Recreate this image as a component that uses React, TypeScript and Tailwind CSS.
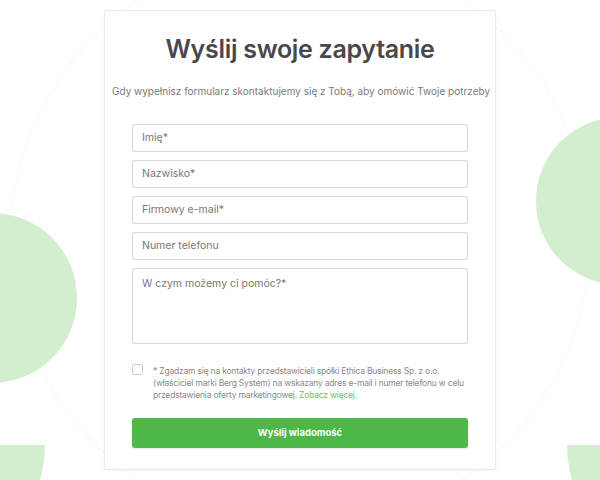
import React from 'react';

const fields = ['Imię*', 'Nazwisko*', 'Firmowy e-mail*', 'Numer telefonu'];

const App: React.FC = () => {
    return (
        <div className="relative w-[600px] h-[480px] overflow-hidden bg-white font-['Inter',sans-serif]">
            {/* background decoration */}
            <div className="absolute left-[10px] top-[-50px] w-[580px] h-[580px] rounded-full border border-dashed border-[#f3f3f3]"></div>
            <div className="absolute left-[-93px] top-[213px] w-[170px] h-[170px] rounded-full bg-[#d3edcf]"></div>
            <div className="absolute left-[536px] top-[117px] w-[168px] h-[168px] rounded-full bg-[#d3edcf]"></div>
            <div className="absolute left-[-205px] top-[445px] w-[250px] h-[125px] rounded-b-full bg-[#d3edcf]"></div>
            <div className="absolute left-[567px] top-[445px] w-[250px] h-[125px] rounded-b-full bg-[#d3edcf]"></div>

            <div className="relative flex justify-center pt-[10px]">
                <div className="w-[392px] h-[460px] bg-white border border-[#e9e9e9] rounded-[2px] shadow-[0_1px_3px_rgba(0,0,0,0.04)] px-[27px] pt-[22px]">
                    <h1 className="text-center text-[25px] leading-[32px] font-semibold text-[#48484a] tracking-[-0.3px]">Wyślij swoje zapytanie</h1>
                    <p className="mt-[18px] -mx-[20px] whitespace-nowrap text-center text-[10px] leading-[16px] text-[#7a7a7a]">
                        Gdy wypełnisz formularz skontaktujemy się z Tobą, aby omówić Twoje potrzeby
                    </p>

                    <div className="mt-[25px] flex flex-col gap-[8px]">
                        {fields.map((f) => (
                            <div key={f} className="h-[28px] border border-[#d6d6d6] rounded-[3px] flex items-center px-[9px] text-[10.5px] text-[#777]">
                                {f}
                            </div>
                        ))}
                        <div className="h-[76px] border border-[#d6d6d6] rounded-[3px] px-[9px] pt-[7px] text-[10.5px] text-[#777]">
                            W czym możemy ci pomóc?*
                        </div>
                    </div>

                    <div className="mt-[20px] flex gap-[10px]">
                        <div className="w-[11px] h-[11px] shrink-0 border border-[#cfcfcf] rounded-[2px]"></div>
                        <p className="pt-[1px] text-[8.5px] leading-[12px] tracking-[-0.2px] text-[#8a8a8a]">
                            * Zgadzam się na kontakty przedstawicieli spółki Ethica Business Sp. z o.o. (właściciel marki Berg System) na wskazany adres e-mail i numer telefonu w celu przedstawienia oferty marketingowej. <span className="text-[#6cc267]">Zobacz więcej.</span>
                        </p>
                    </div>

                    <button className="mt-[17px] w-full h-[30px] rounded-[3px] bg-[#4db848] text-white text-[9.5px] font-bold shadow-[0_1px_2px_rgba(0,0,0,0.1)]">
                        Wyślij wiadomość
                    </button>
                </div>
            </div>
        </div>
    );
};

export default App;
